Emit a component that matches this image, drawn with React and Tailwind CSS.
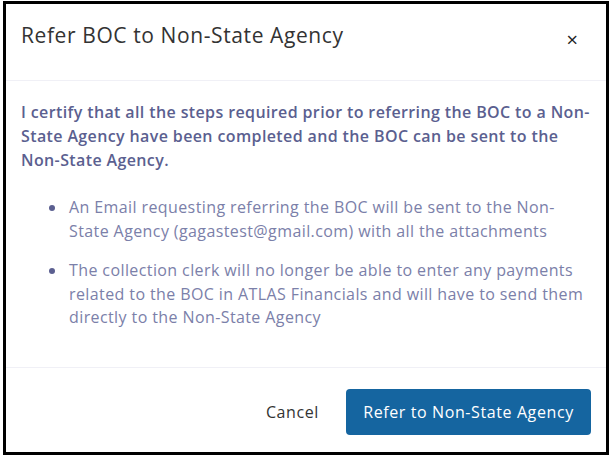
import React from 'react';

const font = { fontFamily: '"Open Sans", "Noto Sans", sans-serif' };

export default function App() {
  return (
    <div className="h-[461px] w-[615px] bg-white pt-px pl-[3px]" style={font}>
      <div className="flex h-[454px] w-[606px] flex-col border-[3px] border-black bg-white">
        <div className="flex h-[77px] items-start justify-between border-b border-[#f0f0f6] pl-[15px] pr-[28px] pt-[16px]">
          <h2 className="text-[21px] leading-[30px] tracking-[0.6px] text-[#333]">
            Refer BOC to Non-State Agency
          </h2>
          <button className="mt-[10px] text-[20px] leading-none text-[#222]">×</button>
        </div>

        <div className="flex-1 border-b border-[#f0f0f6] pl-[15px] pr-[14px] pt-[19px]">
          <p className="text-[16px] font-semibold leading-[24px] tracking-[0.38px] text-[#5b5f90]">
            I certify that all the steps required prior to referring the BOC to a Non-State Agency
            have been completed and the BOC can be sent to the Non-State Agency.
          </p>
          <ul className="mt-[24px] list-disc space-y-[16px] pl-[46px] text-[16px] leading-[23.5px] tracking-[0.4px] text-[#7b80a9] marker:text-[#5b5f90]">
            <li className="pl-[2px]">
              An Email requesting referring the BOC will be sent to the Non-State Agency
              (gagastest@gmail.com) with all the attachments
            </li>
            <li className="pl-[2px]">
              The collection clerk will no longer be able to enter any payments related to the BOC
              in ATLAS Financials and will have to send them directly to the Non-State Agency
            </li>
          </ul>
        </div>

        <div className="flex h-[84px] items-center justify-end gap-[25px] pr-[15px] pt-[3px]">
          <button className="px-[2px] text-[16px] tracking-[0.6px] text-[#333]">Cancel</button>
          <button className="h-[46px] w-[245px] rounded-[4px] bg-[#1565a0] text-[16px] tracking-[0.6px] text-white">
            Refer to Non-State Agency
          </button>
        </div>
      </div>
    </div>
  );
}
